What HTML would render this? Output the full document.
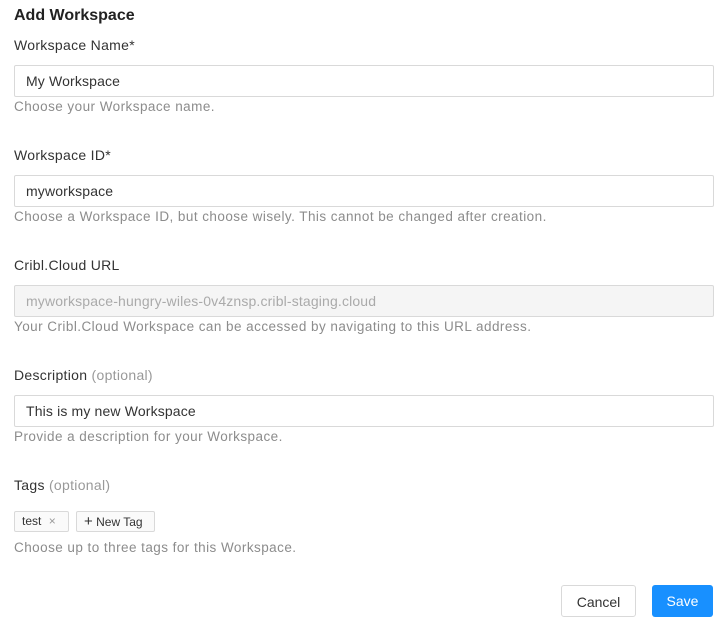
<!DOCTYPE html>
<html><head><style>
body{margin:0;background:#fff;font-family:"Liberation Sans",sans-serif;color:#333;width:728px;height:630px;position:relative;overflow:hidden}
.a{position:absolute}
.t{left:14px;top:7px;font-size:16px;font-weight:bold;color:#222}
.l{left:14px;font-size:14px;color:#333;letter-spacing:0.3px}
.l span{color:#999}
.i{left:14px;height:30px;border:1px solid #d9d9d9;border-radius:2px;font-size:14px;line-height:30px;padding-left:11px;box-sizing:content-box;width:687px;color:#333;letter-spacing:0.15px}
.h{left:14px;font-size:13.5px;color:#8c8c8c;letter-spacing:0.45px}
.dis{background:#f5f5f5;color:#aaa}
.tag{top:511px;border:1px solid #d9d9d9;border-radius:2px;background:#fafafa;font-size:12px;line-height:19px;box-sizing:border-box;height:21px}
.btn{top:585px;height:32px;border-radius:3px;font-size:14px;line-height:32px;text-align:center;box-sizing:border-box}
</style></head><body>
<div class="a t">Add Workspace</div>
<div class="a l" style="top:37px">Workspace Name*</div>
<div class="a i" style="top:65px">My Workspace</div>
<div class="a h" style="top:99px">Choose your Workspace name.</div>
<div class="a l" style="top:147px">Workspace ID*</div>
<div class="a i" style="top:175px">myworkspace</div>
<div class="a h" style="top:209px">Choose a Workspace ID, but choose wisely. This cannot be changed after creation.</div>
<div class="a l" style="top:257px">Cribl.Cloud URL</div>
<div class="a i dis" style="top:285px">myworkspace-hungry-wiles-0v4znsp.cribl-staging.cloud</div>
<div class="a h" style="top:319px">Your Cribl.Cloud Workspace can be accessed by navigating to this URL address.</div>
<div class="a l" style="top:367px">Description <span>(optional)</span></div>
<div class="a i" style="top:395px">This is my new Workspace</div>
<div class="a h" style="top:429px">Provide a description for your Workspace.</div>
<div class="a l" style="top:477px">Tags <span>(optional)</span></div>
<div class="a tag" style="left:14px;width:55px;padding-left:7px">test <span style="color:#999;margin-left:4px">×</span></div>
<div class="a tag" style="left:76px;width:79px;padding-left:7px"><span style="font-size:15px">+</span> New Tag</div>
<div class="a h" style="top:540px">Choose up to three tags for this Workspace.</div>
<div class="a btn" style="left:561px;width:75px;border:1px solid #d9d9d9;color:#333">Cancel</div>
<div class="a btn" style="left:652px;width:61px;background:#1890ff;color:#fff">Save</div>
</body></html>
